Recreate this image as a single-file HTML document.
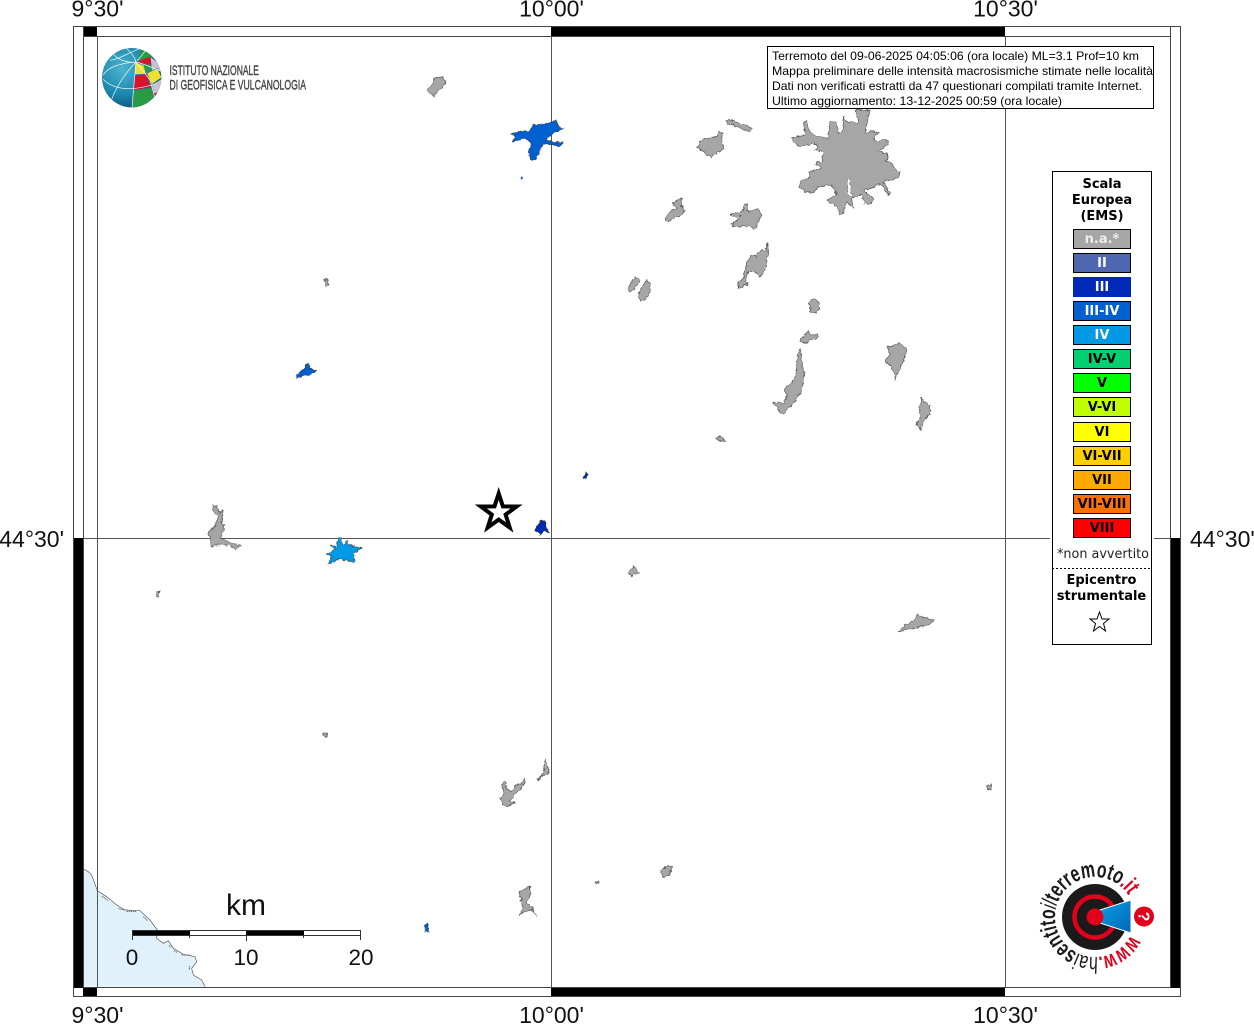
<!DOCTYPE html>
<html><head><meta charset="utf-8"><style>
html,body{margin:0;padding:0;background:#fff;width:1254px;height:1024px;overflow:hidden}
svg{display:block}
.ax{font:23px "Liberation Sans",sans-serif;fill:#111}
.sc{font:22.5px "Liberation Sans",sans-serif;fill:#111;text-anchor:middle}
.info{font:12px "Liberation Sans",sans-serif;fill:#000}
.lg{font:bold 13px "DejaVu Sans",sans-serif;text-anchor:middle;fill:#000}
.g polygon{fill:#a6a6a6;stroke:#555;stroke-width:2;stroke-linejoin:round}
</style></head><body>
<svg width="1254" height="1024" viewBox="0 0 1254 1024" xmlns="http://www.w3.org/2000/svg">
<defs>
<clipPath id="gl"><circle cx="215" cy="233" r="89"/></clipPath>
<radialGradient id="sp" cx="35%" cy="35%" r="75%"><stop offset="0" stop-color="#4db5cf"/><stop offset=".6" stop-color="#1a86ad"/><stop offset="1" stop-color="#0b4a6e"/></radialGradient>
<linearGradient id="cone" x1="0" x2="1" y1="0" y2="1"><stop offset="0" stop-color="#0aa0ea"/><stop offset="1" stop-color="#0065b3"/></linearGradient>
<path id="ring" d="M1130.6 935.2A40 40 0 1 1 1129.6 897"/>
<filter id="rough" filterUnits="userSpaceOnUse" x="0" y="0" width="1254" height="1024" color-interpolation-filters="sRGB">
<feTurbulence type="fractalNoise" baseFrequency=".28" numOctaves="2" seed="4" result="n"/>
<feDisplacementMap in="SourceGraphic" in2="n" scale="4" xChannelSelector="R" yChannelSelector="G" result="d"/>
<feGaussianBlur in="d" stdDeviation=".3"/>
</filter>
</defs>

<!-- coast -->
<g transform="translate(70 860) scale(.33333)">
<polygon fill="#e0f1fc" points="40,27 55,35 65,45 82,92 110,110 140,135 165,150 210,152 240,180 262,210 260,235 280,250 295,242 310,265 340,283 375,290 380,305 365,325 370,345 395,360 405,380 40,380"/>
<polyline fill="none" stroke="#555" stroke-width="2" points="40,27 55,35 65,45 82,92 110,110 140,135 165,150 210,152 240,180 262,210 260,235 280,250 295,242 310,265 340,283 375,290 380,305 365,325 370,345 395,360 405,380"/>
<path fill="none" stroke="#666" stroke-width="3" stroke-dasharray="4 2" d="M96 108l18 14M145 146l20 4M170 154h30M220 170l12 12M297 256l6 6M312 272l10 6M335 285h25M358 318v10"/>
</g>

<!-- grid -->
<g stroke="#555" stroke-width="1" fill="none" shape-rendering="crispEdges">
<line x1="97.5" y1="36" x2="97.5" y2="988"/>
<line x1="551.5" y1="36" x2="551.5" y2="988"/>
<line x1="1005.5" y1="36" x2="1005.5" y2="988"/>
<line x1="83" y1="538.5" x2="1171" y2="538.5"/>
</g>

<!-- frame -->
<g shape-rendering="crispEdges">
<rect x="83" y="26" width="14" height="10" fill="#000"/>
<rect x="551" y="26" width="454" height="10" fill="#000"/>
<rect x="83" y="988" width="14" height="9" fill="#000"/>
<rect x="551" y="988" width="454" height="9" fill="#000"/>
<rect x="73" y="538" width="10" height="450" fill="#000"/>
<rect x="1171" y="538" width="10" height="450" fill="#000"/>
<g fill="none" stroke="#444" stroke-width="1">
<rect x="73.5" y="26.5" width="1107" height="970"/>
<rect x="83.5" y="36.5" width="1087" height="951"/>
</g>
<line x1="83.5" y1="26" x2="83.5" y2="36" stroke="#444"/>
<line x1="1170.5" y1="26" x2="1170.5" y2="36" stroke="#444"/>
</g>

<!-- axis labels -->
<text class="ax" x="97.5" y="16.5" text-anchor="middle">9°30'</text>
<text class="ax" x="551.5" y="16.5" text-anchor="middle">10°00'</text>
<text class="ax" x="1005.5" y="16.5" text-anchor="middle">10°30'</text>
<text class="ax" x="97.5" y="1023" text-anchor="middle">9°30'</text>
<text class="ax" x="551.5" y="1023" text-anchor="middle">10°00'</text>
<text class="ax" x="1005.5" y="1023" text-anchor="middle">10°30'</text>
<text class="ax" x="64" y="547" text-anchor="end">44°30'</text>
<text class="ax" x="1190" y="547">44°30'</text>

<g filter="url(#rough)">
<!-- gray localities -->
<g class="g" transform="translate(690 100) scale(.33333)">
<polygon points="497,30 540,30 530,75 527,100 545,92 565,98 550,112 560,125 585,118 595,125 590,135 565,155 590,160 595,175 585,182 608,190 612,205 630,218 625,232 600,240 580,245 600,280 595,285 570,250 545,265 520,270 550,295 545,310 525,310 515,285 485,295 490,325 470,305 460,340 450,345 440,320 410,300 440,285 425,255 385,260 370,280 345,275 328,260 335,240 355,235 360,215 395,205 375,190 395,185 400,155 375,150 385,140 370,130 325,140 305,115 345,105 340,70 350,60 360,95 380,110 415,115 420,65 440,70 445,100 460,90 460,50 470,65 505,70"/>
<polygon style="fill:#fff;stroke-width:1" points="472,232 480,240 484,290 472,282"/>
<polygon points="20,145 30,125 45,115 80,110 88,95 97,100 95,125 103,145 85,155 65,170 50,165 38,150"/>
<polygon points="108,62 115,58 185,83 180,95 165,90 130,75 112,72"/>
<polygon points="118,342 145,338 160,330 165,310 172,315 170,335 205,325 215,345 205,365 195,390 180,380 155,378 130,382 125,375 150,350 125,348"/>
<polygon points="232,428 235,455 225,510 210,530 195,515 175,515 165,550 175,548 170,555 145,565 145,545 158,540 170,490 185,465 200,470 205,455 228,450"/>
</g>
<g class="g" transform="translate(620 190) scale(.33333)">
<polygon points="135,88 155,60 170,55 158,38 185,22 185,50 195,60 185,75 160,85 145,97"/>
<polygon points="22,300 35,275 45,262 62,270 45,295 30,305"/>
<polygon points="55,310 80,270 92,285 90,305 75,330 60,333"/>
</g>
<g class="g" transform="translate(760 280) scale(.33333)">
<polygon points="145,68 160,55 175,65 178,85 168,100 150,98 152,80"/>
<polygon points="118,183 145,152 152,165 175,162 172,175 150,180 135,192 125,185"/>
<polygon points="122,205 125,235 132,290 125,335 100,370 70,400 60,398 50,380 38,372 40,365 70,370 80,350 72,325 95,310 108,285 112,230 118,208"/>
<polygon points="382,197 395,200 420,188 440,210 430,245 405,298 400,270 375,240 390,225"/>
<polygon points="485,352 490,365 510,375 512,405 495,415 480,450 470,430 480,415 478,385"/>
</g>
<g class="g" transform="translate(200 480) scale(.33333)">
<polygon points="38,78 50,78 60,100 68,90 65,130 75,135 62,175 95,190 122,195 105,210 90,195 60,195 35,198 30,175 25,155 45,140 55,110 40,95"/>
</g>
<g class="g" transform="translate(490 750) scale(.33333)">
<polygon points="30,145 42,130 35,100 45,95 50,115 65,125 80,105 95,100 103,85 107,92 95,115 75,130 60,155 75,158 50,170 40,165"/>
<polygon points="140,90 160,70 165,28 172,40 178,70 155,78 145,92"/>
<polygon points="88,425 118,410 122,430 110,460 125,470 140,500 125,480 105,485 88,495 100,475"/>
</g>
<g class="g">
<polygon style="stroke-width:.7" points="426,90 433,84 435,78 443,77 446,82 442,88 437,91 434,97 430,93"/>
<polygon style="stroke-width:.7" points="324,280 327,279 329,285 326,286"/>
<polygon style="stroke-width:.7" points="157,592 160,591 158,598 156,596"/>
<polygon style="stroke-width:.7" points="323,733 326,732 327,736 324,737"/>
<polygon style="stroke-width:.7" points="630,570 634,566 638,572 632,576 629,574"/>
<polygon style="stroke-width:.7" points="716,438 720,436 726,441 718,441"/>
<polygon style="stroke-width:.7" points="898,632 908,623 915,620 917,614 922,617 934,620 928,625 918,628 905,630"/>
<polygon style="stroke-width:.7" points="988,785 991,785 991,790 988,789"/>
<polygon style="stroke-width:.7" points="595,882 599,882 597,884"/>
<polygon style="stroke-width:.7" points="661,870 668,865 672,867 670,875 663,877"/>
</g>

<!-- blue localities -->
<g transform="translate(200 480) scale(.33333)">
<polygon fill="#0099e6" stroke="#456" stroke-width="2" points="415,172 425,172 425,195 445,182 445,195 485,205 460,220 465,248 440,240 415,238 385,252 395,230 380,222 405,210 392,195 410,200"/>
</g>
<g transform="translate(470 110) scale(.33333)">
<polygon fill="#0060d0" stroke="#345" stroke-width="2" points="125,72 165,62 175,65 190,45 235,40 258,30 265,50 280,55 250,70 225,90 280,100 270,108 245,105 220,100 205,135 195,150 180,150 175,125 185,100 165,85 130,95 135,78"/>
<circle cx="156" cy="204" r="4" fill="#0040b0"/>
</g>
<polygon fill="#0060d0" stroke="#345" stroke-width=".7" points="296,375 303,370 307,364 310,368 316,371 310,375 303,376 297,378"/>
<polygon fill="#0060c0" stroke="#345" stroke-width=".6" points="425,925 428,923 429,932 425,932"/>
<g transform="translate(470 460) scale(.33333)">
<polygon fill="#0029b8" stroke="#234" stroke-width="2" points="210,180 225,185 230,205 238,218 222,212 212,228 205,215 193,212 205,195"/>
<polygon fill="#0029b8" stroke="#234" stroke-width="2" points="348,36 355,45 350,55 338,53 345,45"/>
</g>
</g>

<!-- epicentre star -->
<polygon fill="#fff" stroke="#000" stroke-width="4" stroke-miterlimit="10" points="498.7,493.5 502.9,506.4 516.6,506.5 505.6,514.6 509.7,527.5 498.7,519.6 487.7,527.5 491.8,514.6 480.8,506.5 494.5,506.4"/>

<!-- INGV logo -->
<g transform="translate(60 0) scale(.33333)">
<circle cx="215" cy="233" r="89" fill="url(#sp)"/>
<g clip-path="url(#gl)">
<polygon fill="#2a9a44" points="232,178 245,150 280,160 272,178"/>
<polygon fill="#d8142f" points="230,185 272,170 276,195 250,192"/>
<polygon fill="#efe32a" points="226,188 250,196 258,222 225,222"/>
<polygon fill="#2a9a44" points="250,192 276,195 270,212 258,216"/>
<polygon fill="#d8142f" points="224,226 260,222 272,262 222,270"/>
<polygon fill="#efe32a" points="262,220 292,206 304,232 276,252"/>
<polygon fill="#c7bfd2" points="272,172 296,190 304,215 290,204 276,212"/>
<polygon fill="#c7bfd2" points="276,256 306,236 304,290 284,290"/>
<polygon fill="#2a9a44" points="220,272 274,264 282,292 250,322 218,326"/>
<polygon fill="#d8142f" points="282,280 296,276 284,296"/>
<g fill="none" stroke="#e6f3f6" stroke-width="2.2">
<path d="M228 186C180 190 145 200 130 225"/>
<path d="M200 146C215 160 225 172 228 186"/>
<path d="M160 162C170 175 195 190 228 186"/>
<path d="M228 186C225 220 220 270 216 326"/>
<path d="M228 186C190 225 165 270 155 298"/>
<path d="M130 238C160 270 220 275 290 250"/>
<path d="M228 186L270 240 284 292"/>
<path d="M232 182L262 146"/>
<path d="M228 186C250 190 280 205 304 214"/>
<path d="M150 180C175 180 200 160 240 146"/>
</g>
</g>
</g>
<text x="169.5" y="75" font-family="Liberation Sans,sans-serif" font-size="14" fill="#444" stroke="#444" stroke-width=".4" textLength="89.5" lengthAdjust="spacingAndGlyphs">ISTITUTO NAZIONALE</text>
<text x="169.5" y="89.3" font-family="Liberation Sans,sans-serif" font-size="14" fill="#444" stroke="#444" stroke-width=".4" textLength="136.5" lengthAdjust="spacingAndGlyphs">DI GEOFISICA E VULCANOLOGIA</text>

<!-- info box -->
<rect x="767.5" y="46.5" width="386" height="62" fill="#fff" stroke="#000"/>
<text class="info" x="772" y="60" textLength="367" lengthAdjust="spacingAndGlyphs">Terremoto del 09-06-2025 04:05:06 (ora locale) ML=3.1 Prof=10 km</text>
<text class="info" x="772" y="75" textLength="381" lengthAdjust="spacingAndGlyphs">Mappa preliminare delle intensità macrosismiche stimate nelle località</text>
<text class="info" x="772" y="90" textLength="370" lengthAdjust="spacingAndGlyphs">Dati non verificati estratti da 47 questionari compilati tramite Internet.</text>
<text class="info" x="772" y="105" textLength="290" lengthAdjust="spacingAndGlyphs">Ultimo aggiornamento: 13-12-2025 00:59 (ora locale)</text>

<!-- legend -->
<rect x="1050" y="169" width="104" height="478" fill="#fff"/>
<rect x="1052.5" y="171.5" width="99" height="473" fill="#fff" stroke="#000"/>
<text class="lg" x="1102" y="188">Scala</text>
<text class="lg" x="1102" y="204">Europea</text>
<text class="lg" x="1102" y="220">(EMS)</text>
<g stroke="#000" stroke-width="1" shape-rendering="crispEdges">
<rect x="1073.5" y="229.5" width="57" height="19" fill="#a6a6a6"/>
<rect x="1073.5" y="253.5" width="57" height="19" fill="#4f67b0"/>
<rect x="1073.5" y="277.5" width="57" height="19" fill="#0029b8" stroke="#0029b8"/>
<rect x="1073.5" y="301.5" width="57" height="19" fill="#0060d0"/>
<rect x="1073.5" y="325.5" width="57" height="19" fill="#0099e6"/>
<rect x="1073.5" y="349.5" width="57" height="19" fill="#00d070"/>
<rect x="1073.5" y="373.5" width="57" height="19" fill="#00ff00"/>
<rect x="1073.5" y="397.5" width="57" height="19" fill="#c0ff00"/>
<rect x="1073.5" y="422.5" width="57" height="19" fill="#ffff00"/>
<rect x="1073.5" y="446.5" width="57" height="19" fill="#ffd000"/>
<rect x="1073.5" y="470.5" width="57" height="19" fill="#ffaa00"/>
<rect x="1073.5" y="494.5" width="57" height="19" fill="#ff7000"/>
<rect x="1073.5" y="518.5" width="57" height="19" fill="#ff0000"/>
</g>
<text class="lg" x="1102" y="243" style="fill:#eee">n.a.*</text>
<text class="lg" x="1102" y="267" style="fill:#fff">II</text>
<text class="lg" x="1102" y="291" style="fill:#fff">III</text>
<text class="lg" x="1102" y="315" style="fill:#fff">III-IV</text>
<text class="lg" x="1102" y="339" style="fill:#fff">IV</text>
<text class="lg" x="1102" y="363">IV-V</text>
<text class="lg" x="1102" y="387">V</text>
<text class="lg" x="1102" y="411">V-VI</text>
<text class="lg" x="1102" y="436">VI</text>
<text class="lg" x="1102" y="460">VI-VII</text>
<text class="lg" x="1102" y="484">VII</text>
<text class="lg" x="1102" y="508">VII-VIII</text>
<text class="lg" x="1102" y="532">VIII</text>
<text x="1103" y="558" font-family="DejaVu Sans,sans-serif" font-size="13" text-anchor="middle" fill="#222" textLength="92" lengthAdjust="spacingAndGlyphs">*non avvertito</text>
<line x1="1052" y1="568.5" x2="1150" y2="568.5" stroke="#000" stroke-dasharray="2 2"/>
<text class="lg" x="1101.5" y="584">Epicentro</text>
<text class="lg" x="1101.5" y="600">strumentale</text>
<polygon fill="#fff" stroke="#000" stroke-width="1" points="1099.5,612 1102,619 1109,619 1103.5,623.5 1105.5,631 1099.5,626.5 1093.5,631 1095.5,623.5 1090,619 1097,619"/>

<!-- scale bar -->
<g shape-rendering="crispEdges">
<rect x="132" y="930" width="58" height="6" fill="#000"/>
<rect x="246" y="930" width="58" height="6" fill="#000"/>
<rect x="132.5" y="930.5" width="228" height="5" fill="none" stroke="#333"/>
<path d="M132.5 930v10M189.5 936v2M246.5 936v5M303.5 936v2M360.5 930v10" stroke="#333" fill="none"/>
</g>
<text x="246" y="915" font-family="Liberation Sans,sans-serif" font-size="30" text-anchor="middle" fill="#111">km</text>
<text class="sc" x="132" y="965">0</text>
<text class="sc" x="246" y="965">10</text>
<text class="sc" x="361" y="965">20</text>

<!-- hai sentito logo -->
<circle cx="1095" cy="917" r="33" fill="#1a1a1a"/>
<circle cx="1095" cy="917" r="20.5" fill="none" stroke="#e2001a" stroke-width="4.5"/>
<polygon points="1100,910 1131,900 1131,933 1100,923" fill="url(#cone)" stroke="#fff" stroke-width="1"/>
<circle cx="1095" cy="917" r="8.5" fill="#e2001a"/>
<circle cx="1144" cy="916.5" r="10" fill="#e2001a"/>
<text x="1144" y="922" font-family="Liberation Sans,sans-serif" font-weight="bold" font-size="16" text-anchor="middle" fill="#fff" transform="rotate(90 1144 916.5)">?</text>
<text font-family="Liberation Sans,sans-serif" font-size="23" fill="#1a1a1a">
<textPath href="#ring" textLength="209" lengthAdjust="spacingAndGlyphs"><tspan fill="#e2001a" font-weight="bold">www.</tspan><tspan>hai</tspan><tspan font-weight="bold">sentito</tspan><tspan font-style="italic">il</tspan><tspan font-weight="bold">terremoto</tspan><tspan fill="#e2001a" font-weight="bold">.it</tspan></textPath>
</text>
</svg>
</body></html>
